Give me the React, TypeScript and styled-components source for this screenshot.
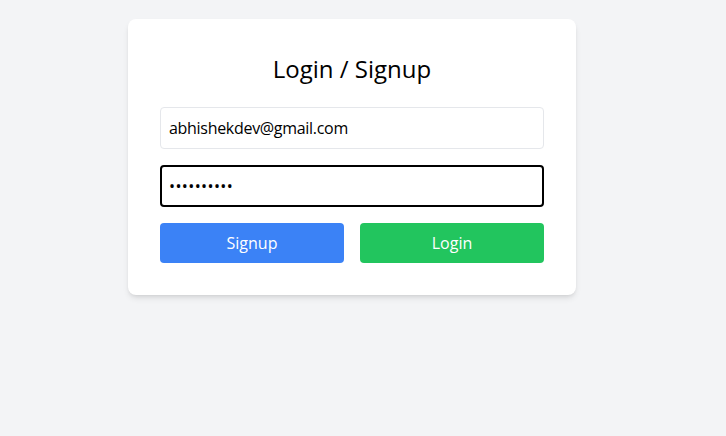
import React from "react";
import styled, { createGlobalStyle } from "styled-components";

const Global = createGlobalStyle`
  html, body { margin: 0; padding: 0; background: #f3f4f6; }
  body { font-family: "Segoe UI", "Open Sans", "Noto Sans", sans-serif; }
  * { box-sizing: border-box; }
`;

const Page = styled.div`
  min-height: 436px;
  background: #f3f4f6;
  padding: 19px 22px 0 0;
  display: flex;
  justify-content: center;
  align-items: flex-start;
`;

const Card = styled.div`
  width: 448px;
  background: #ffffff;
  border-radius: 8px;
  padding: 32px;
  box-shadow: 0 4px 6px -1px rgba(0, 0, 0, 0.1), 0 2px 4px -2px rgba(0, 0, 0, 0.1);
  display: flex;
  flex-direction: column;
`;

const Title = styled.h2`
  margin: 0 0 22px;
  padding-top: 2px;
  font-size: 24px;
  line-height: 32px;
  font-weight: 400;
  color: #000;
  text-align: center;
`;

const Input = styled.input<{ $focused?: boolean }>`
  width: 100%;
  height: 42px;
  margin-bottom: 16px;
  padding: 0 ${(p) => (p.$focused ? 7 : 8)}px;
  font-family: inherit;
  font-size: 16px;
  letter-spacing: ${(p) => (p.$focused ? "0.4px" : "-0.3px")};
  color: #000;
  background: #fff;
  border: ${(p) => (p.$focused ? "2px solid #000" : "1px solid #e5e7eb")};
  border-radius: 4px;
  outline: none;
`;

const Row = styled.div`
  display: flex;
  gap: 16px;
`;

const Button = styled.button<{ $color: string }>`
  flex: 1;
  height: 40px;
  border: none;
  border-radius: 4px;
  background: ${(p) => p.$color};
  color: #fff;
  font-family: inherit;
  font-size: 16px;
  cursor: pointer;
`;

export default function App() {
  return (
    <>
      <Global />
      <Page>
        <Card>
          <Title>Login / Signup</Title>
          <Input type="email" defaultValue="abhishekdev@gmail.com" />
          <Input type="password" defaultValue="abhishekd1" $focused />
          <Row>
            <Button $color="#3b82f6">Signup</Button>
            <Button $color="#22c55e">Login</Button>
          </Row>
        </Card>
      </Page>
    </>
  );
}
